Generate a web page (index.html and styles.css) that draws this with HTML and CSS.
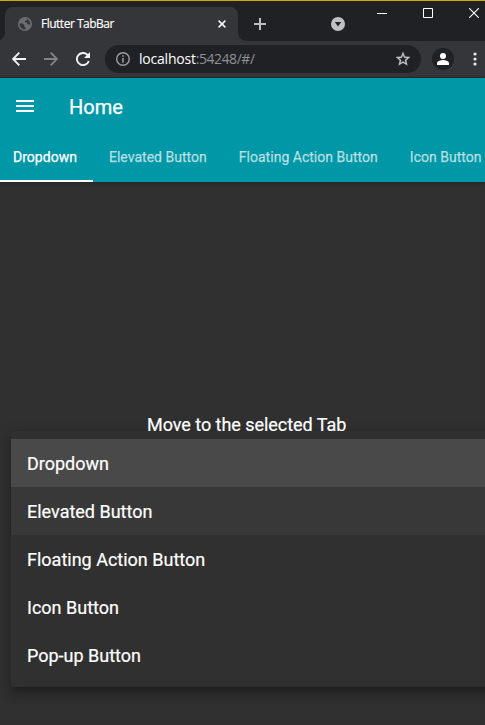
FILE: index.html
```html
<!DOCTYPE html>
<html lang="en">
<head>
<meta charset="utf-8">
<title>Flutter TabBar</title>
<link rel="stylesheet" href="styles.css">
</head>
<body>
<div class="window">
  <header class="titlebar">
    <div class="browser-tab">
      <svg class="globe" width="14" height="14" viewBox="0 0 14 14"><circle cx="7" cy="7" r="7" fill="#6a6d71"/><path d="M1.6 6.4 4.6 6.6 6.4 8.2 6.2 9.8 7.8 10.6 7.2 12.4C4 12.6 1.4 9.8 1.6 6.4ZM7 1.6 9.4 2.2 8.6 3.4 6.9 3.9 7 5.3 8.8 5.6 9.4 7.2 12.3 7.4C12.3 5 10.6 1.6 7 1.6Z" fill="#35363a"/></svg>
      <span class="tab-title">Flutter TabBar</span>
      <svg class="tab-close" width="8" height="8" viewBox="0 0 8 8"><path d="M.6.6 7.4 7.4M7.4.6.6 7.4" stroke="#f1f3f4" stroke-width="1.6"/></svg>
    </div>
    <svg class="new-tab" width="12" height="12" viewBox="0 0 12 12"><path d="M6 0V12M0 6H12" stroke="#bdc1c6" stroke-width="2"/></svg>
    <svg class="tab-search" width="14" height="14" viewBox="0 0 14 14"><circle cx="7" cy="7" r="7" fill="#bdc1c6"/><path d="M3.8 5H10.2L7 9.6Z" fill="#202124"/></svg>
    <div class="window-buttons">
      <svg width="10" height="10" viewBox="0 0 10 10"><path d="M0 5.5H10" stroke="#fff"/></svg>
      <svg width="10" height="10" viewBox="0 0 10 10"><path d="M.5.5H9.5V9.5H.5Z" fill="none" stroke="#fff"/></svg>
      <svg width="10" height="10" viewBox="0 0 10 10"><path d="M0 0 10 10M10 0 0 10" stroke="#fff" stroke-width="1.1"/></svg>
    </div>
  </header>
  <nav class="toolbar">
    <svg class="back" width="14" height="14" viewBox="0 0 14 14"><path d="M14 7H1.5M7.3.7 1 7 7.3 13.3" fill="none" stroke="#f1f3f4" stroke-width="1.9"/></svg>
    <svg class="forward" width="14" height="14" viewBox="0 0 14 14"><path d="M0 7H12.5M6.7.7 13 7 6.7 13.3" fill="none" stroke="#818386" stroke-width="1.9"/></svg>
    <svg class="reload" width="14" height="14" viewBox="0 0 14 14"><path d="M12.8 9A6.1 6.1 0 1 1 11.3 2.7L12.5 4" fill="none" stroke="#f1f3f4" stroke-width="1.9"/><path d="M14 0V6H8Z" fill="#f1f3f4"/></svg>
    <div class="address">
      <svg class="info" width="14" height="14" viewBox="0 0 14 14"><circle cx="7" cy="7" r="6.3" fill="none" stroke="#9aa0a6" stroke-width="1.4"/><path d="M7 3.3V4.8M7 6V10.7" stroke="#9aa0a6" stroke-width="1.5"/></svg>
      <span class="url"><span class="host">localhost</span>:54248/#/</span>
      <svg class="star" width="14" height="14" viewBox="2 2 20 20"><path d="m22 9.24-7.19-.62L12 2 9.19 8.63 2 9.24l5.46 4.73L5.82 21 12 17.27 18.18 21l-1.63-7.03zM12 15.4l-3.76 2.27 1-4.28-3.32-2.88 4.38-.38L12 6.1l1.71 4.04 4.38.38-3.32 2.88 1 4.28z" fill="#c4c7ca" stroke="#c4c7ca" stroke-width=".5"/></svg>
    </div>
    <svg class="profile" width="22" height="22" viewBox="0 0 22 22"><circle cx="11" cy="11" r="11" fill="#202124"/><circle cx="11" cy="8" r="3" fill="#fff"/><path d="M5 17V15.2C5 13.2 9 12 11 12S17 13.2 17 15.2V17Z" fill="#fff"/></svg>
    <svg class="more" width="4" height="14" viewBox="0 0 4 14"><g fill="#e8eaed"><circle cx="2" cy="2" r="1.6"/><circle cx="2" cy="7" r="1.6"/><circle cx="2" cy="12" r="1.6"/></g></svg>
  </nav>
  <section class="app-bar">
    <div class="app-heading">
      <svg width="18" height="12" viewBox="0 0 18 12"><path d="M0 0H18V2H0ZM0 5H18V7H0ZM0 10H18V12H0Z" fill="#fff"/></svg>
      <h1>Home</h1>
    </div>
    <div class="tabs">
      <div class="tab active"><span>Dropdown</span></div>
      <div class="tab"><span>Elevated Button</span></div>
      <div class="tab"><span>Floating Action Button</span></div>
      <div class="tab"><span>Icon Button</span></div>
    </div>
  </section>
  <main class="content">
    <p class="prompt">Move to the selected Tab</p>
    <ul class="menu">
      <li class="selected">Dropdown</li>
      <li class="hovered">Elevated Button</li>
      <li>Floating Action Button</li>
      <li>Icon Button</li>
      <li>Pop-up Button</li>
    </ul>
  </main>
</div>
</body>
</html>
```
FILE: styles.css
```css
* { box-sizing: border-box; }
body { margin: 0; background: #303030; color: #fff; font-family: Roboto, sans-serif; }
svg { display: block; flex: none; }
.window { width: 485px; height: 725px; overflow: hidden; display: flex; flex-direction: column; }

.titlebar { flex: none; height: 41px; display: flex; align-items: flex-start; padding-left: 5px; background: #202124; border-top: 1px solid #c9ac00; }
.browser-tab { position: relative; width: 233px; height: 34px; margin-top: 6px; padding: 0 12px 0 13px; display: flex; align-items: center; background: #35363a; border-radius: 8px 8px 0 0; }
.browser-tab::before, .browser-tab::after { content: ""; position: absolute; bottom: 0; width: 8px; height: 8px; }
.browser-tab::before { right: 100%; background: radial-gradient(circle at 0 0, transparent 7.5px, #35363a 8px); }
.browser-tab::after { left: 100%; background: radial-gradient(circle at 100% 0, transparent 7.5px, #35363a 8px); }
.tab-title { margin-left: 9px; margin-top: -1px; font: 12px "Open Sans", sans-serif; letter-spacing: -0.5px; white-space: nowrap; -webkit-text-stroke: 0.15px; }
.tab-close { margin-left: auto; }
.new-tab { margin: 17px 0 0 16px; }
.tab-search { margin: 16px 0 0 65px; }
.window-buttons { display: flex; gap: 36px; margin: 7px 0 0 32px; }

.toolbar { flex: none; height: 37px; display: flex; align-items: center; padding: 0 0 1px 12px; background: #35363a; border-bottom: 1px solid #2a2b2d; }
.forward { margin-left: 18px; }
.reload { margin-left: 18px; }
.address { width: 316px; height: 28px; margin-left: 15px; padding: 0 11px; display: flex; align-items: center; background: #202124; border-radius: 14px; }
.url { margin-left: 9px; color: #8e9297; font: 14px "Open Sans", sans-serif; letter-spacing: -0.45px; }
.host { color: #fff; letter-spacing: -0.22px; }
.star { margin-left: auto; }
.profile { margin-left: 11px; }
.more { margin-left: 19px; }

.app-bar { flex: none; height: 104px; background: #0097a7; box-shadow: 0 1px 4px rgba(0, 0, 0, .3); }
.app-heading { height: 56px; display: flex; align-items: center; padding-left: 16px; }
.app-heading h1 { margin: 2px 0 0 35px; font-size: 20px; font-weight: 400; letter-spacing: 0; -webkit-text-stroke: 0.25px; }
.tabs { display: flex; height: 48px; margin-left: -3px; }
.tab { flex: none; padding: 0 16px; height: 48px; display: flex; align-items: center; font-size: 14px; letter-spacing: 0.02px; color: rgba(255, 255, 255, .65); border-bottom: 2px solid transparent; -webkit-text-stroke: 0.25px; }
.tab.active { color: #fff; border-bottom-color: #fff; }

.content { flex: 1; padding-top: 232px; }
.prompt { margin: 0 0 0 147px; height: 22px; font-size: 18px; line-height: 22px; letter-spacing: -0.04px; white-space: nowrap; -webkit-text-stroke: 0.2px; }
.menu { width: 490px; height: 256px; margin: -5px 0 0 11px; padding: 8px 0; list-style: none; border-radius: 2px; box-shadow: 0 5px 5px -3px rgba(0, 0, 0, .2), 0 8px 10px 1px rgba(0, 0, 0, .14), 0 3px 14px 2px rgba(0, 0, 0, .12); }
.menu li { height: 48px; padding: 1px 16px 0; display: flex; align-items: center; font-size: 18px; -webkit-text-stroke: 0.2px; }
.menu .selected { background: #494949; }
.menu .hovered { background: #383838; }
```
